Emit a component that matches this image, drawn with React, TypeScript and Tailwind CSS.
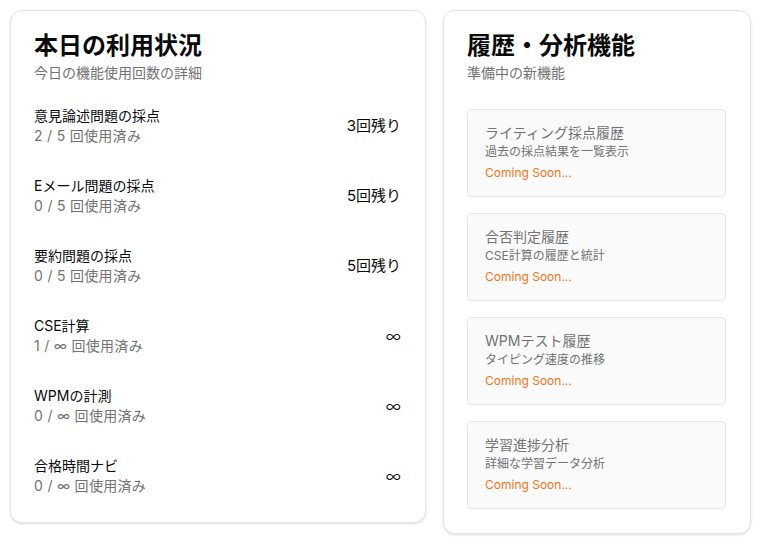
import React from "react";

const usage = [
  { name: "意見論述問題の採点", used: "2", limit: "5", remain: "3回残り" },
  { name: "Eメール問題の採点", used: "0", limit: "5", remain: "5回残り" },
  { name: "要約問題の採点", used: "0", limit: "5", remain: "5回残り" },
  { name: "CSE計算", used: "1", limit: "∞", remain: "∞" },
  { name: "WPMの計測", used: "0", limit: "∞", remain: "∞" },
  { name: "合格時間ナビ", used: "0", limit: "∞", remain: "∞" },
];

const upcoming = [
  { title: "ライティング採点履歴", desc: "過去の採点結果を一覧表示" },
  { title: "合否判定履歴", desc: "CSE計算の履歴と統計" },
  { title: "WPMテスト履歴", desc: "タイピング速度の推移" },
  { title: "学習進捗分析", desc: "詳細な学習データ分析" },
];

export default function App() {
  return (
    <div
      className="flex items-start gap-[17px] p-[10px] bg-white min-h-[538px]"
      style={{ fontFamily: 'Inter, "Noto Sans CJK JP", sans-serif' }}
    >
      {/* usage card */}
      <div className="w-[416px] bg-white border border-[#e5e5e5] rounded-xl shadow-sm pl-[23px] pr-6 pt-[20px] pb-[26px]">
        <h2 className="text-2xl leading-[30px] font-bold text-[#0a0a0a]">本日の利用状況</h2>
        <p className="text-sm leading-5 text-[#737373] mt-[2px]">今日の機能使用回数の詳細</p>
        <div className="mt-[23px] flex flex-col gap-[30px]">
          {usage.map((u) => (
            <div key={u.name} className="flex items-center justify-between">
              <div>
                <div className="text-sm leading-5 text-[#0a0a0a]">{u.name}</div>
                <div className="text-sm leading-5 text-[#737373] tracking-[0.3px]">
                  {u.used} / {u.limit} 回使用済み
                </div>
              </div>
              {u.remain === "∞" ? (
                <div className="text-[17px] leading-6 font-light text-[#0a0a0a]">∞</div>
              ) : (
                <div className="text-[15px] text-[#0a0a0a]">{u.remain}</div>
              )}
            </div>
          ))}
        </div>
      </div>

      {/* history card */}
      <div className="w-[308px] bg-white border border-[#e5e5e5] rounded-xl shadow-sm pl-[23px] pr-6 pt-[20px] pb-[24px]">
        <h2 className="text-2xl leading-[30px] font-bold text-[#0a0a0a]">履歴・分析機能</h2>
        <p className="text-sm leading-5 text-[#737373] mt-[2px]">準備中の新機能</p>
        <div className="mt-[26px] flex flex-col gap-[16px]">
          {upcoming.map((f) => (
            <div key={f.title} className="h-[88px] bg-[#fafafa] border border-[#e5e5e5] rounded-[4px] px-[17px] pt-[13px]">
              <div className="text-sm leading-5 text-[#737373]">{f.title}</div>
              <div className="text-xs leading-4 text-[#737373] mt-[1px]">{f.desc}</div>
              <div className="text-xs leading-4 text-[#f97316] mt-[5px]">Coming Soon...</div>
            </div>
          ))}
        </div>
      </div>
    </div>
  );
}
